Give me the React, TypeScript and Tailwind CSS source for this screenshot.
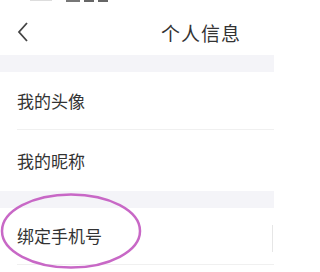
import React from 'react';

export default function App() {
  return (
    <div
      className="w-[274px] h-[272px] overflow-hidden bg-white text-[#333]"
      style={{ fontFamily: '"Noto Sans CJK SC", "Noto Sans", sans-serif' }}
    >
      {/* header (status bar text cut off at the top edge) */}
      <div className="relative flex h-[55px] items-center justify-between pl-[16px] pr-[33px]">
        <div className="absolute left-[30px] top-0 flex gap-[4px]">
          <span className="h-[1px] w-[22px] bg-[#ddd]" />
          <span className="ml-[10px] h-[2px] w-[14px] bg-[#777]" />
          <span className="h-[2px] w-[10px] bg-[#666]" />
          <span className="h-[2px] w-[10px] bg-[#666]" />
        </div>
        <svg width="14" height="22" viewBox="0 0 14 22" className="mt-[8px]">
          <polyline points="11,2 3,11 11,20" fill="none" stroke="#444" strokeWidth="1.8" />
        </svg>
        <span className="mt-[9px] text-[19px] leading-none tracking-[1px]">个人信息</span>
      </div>

      <div className="h-[17px] bg-[#f4f4f8]" />

      <div className="pl-[17px]">
        <div className="flex h-[58px] items-center border-b border-[#f0f0f0] text-[17px]">我的头像</div>
      </div>
      <div className="pl-[17px]">
        <div className="flex h-[61px] items-center text-[17px]">我的昵称</div>
      </div>

      <div className="h-[17px] bg-[#f4f4f8]" />

      <div className="relative pl-[17px]">
        <div className="flex h-[57px] items-center border-b border-[#f0f0f0] text-[17px]">
          绑定手机号
        </div>
        <div className="absolute right-[1px] top-[17px] h-[27px] w-px bg-[#e6e6e6]" />
        <svg className="absolute left-0 top-[-15px]" width="144" height="78" viewBox="0 0 144 78">
          <ellipse cx="71" cy="38" rx="69" ry="36.5" fill="none" stroke="#c868c6" strokeWidth="2.5" />
        </svg>
      </div>
    </div>
  );
}
